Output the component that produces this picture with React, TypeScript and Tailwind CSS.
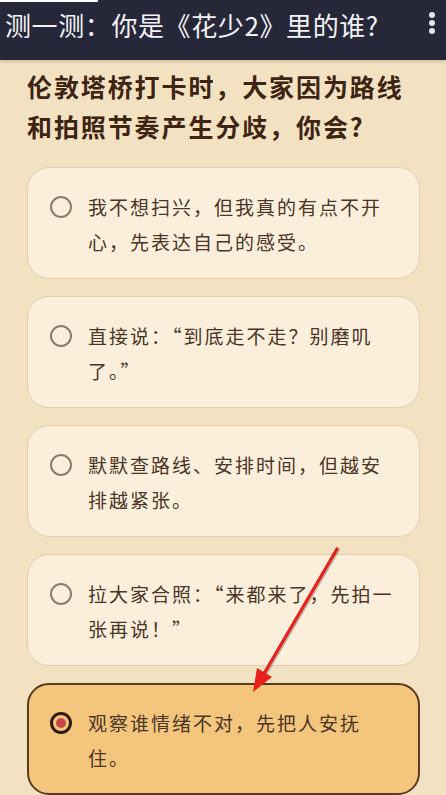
import React from "react";

const options: { lines: string[]; selected?: boolean }[] = [
  { lines: ["我不想扫兴，但我真的有点不开", "心，先表达自己的感受。"] },
  { lines: ["直接说：“到底走不走？别磨叽", "了。”"] },
  { lines: ["默默查路线、安排时间，但越安", "排越紧张。"] },
  { lines: ["拉大家合照：“来都来了，先拍一", "张再说！”"] },
  { lines: ["观察谁情绪不对，先把人安抚", "住。"], selected: true },
];

const font = { fontFamily: '"Noto Sans CJK SC", "Noto Sans", sans-serif' };

function Radio({ selected }: { selected?: boolean }) {
  if (selected) {
    return (
      <div className="flex h-[22px] w-[22px] shrink-0 items-center justify-center rounded-full border-[3px] border-[#2e1c12]">
        <div className="h-[10px] w-[10px] rounded-full bg-[#c7474c]" />
      </div>
    );
  }
  return <div className="h-[22px] w-[22px] shrink-0 rounded-full border-[2.5px] border-[#8b7c71]" />;
}

export default function App() {
  return (
    <div className="relative min-h-[795px] w-[446px] overflow-hidden bg-[#f3e2c2]" style={font}>
      <div className="absolute left-0 top-0 h-[2px] w-[98px] bg-white" />
      <header className="flex h-[60px] w-[446px] items-start bg-[#262739] pt-[10px] shadow-[0_2px_3px_rgba(0,0,0,0.15)]">
        <div className="w-[400px] shrink-0 pl-[5px] text-[26px] leading-[30px] font-normal tracking-[0.6px] text-[#f3f3f5] whitespace-nowrap">
          测一测：你是《花少2》里的谁?
        </div>
        <div className="ml-[28px] mt-[2px] flex w-[8px] shrink-0 flex-col items-center gap-[2px]">
          <div className="h-[6px] w-[6px] rounded-full bg-[#e4e4ea]" />
          <div className="h-[6px] w-[6px] rounded-full bg-[#e4e4ea]" />
          <div className="h-[6px] w-[6px] rounded-full bg-[#e4e4ea]" />
        </div>
      </header>

      <div className="px-[27px] pt-[6px]">
        <h2 className="text-[25px] leading-[40px] font-bold tracking-[1.9px] text-[#3e2413] whitespace-nowrap">
          伦敦塔桥打卡时，大家因为路线
          <br />
          和拍照节奏产生分歧，你会?
        </h2>

        <div className="mt-[21px] flex w-[393px] flex-col gap-[17px]">
          {options.map((o, i) => (
            <div
              key={i}
              className={
                o.selected
                  ? "flex h-[112px] items-start gap-[16px] rounded-[22px] border-2 border-[#5a3a20] bg-[#f4c57c] pl-[21px] pt-[20px]"
                  : "flex h-[112px] items-start gap-[16px] rounded-[22px] border border-[#e2cdac] bg-[#fbefdc] pl-[22px] pt-[21px]"
              }
            >
              <div className="flex h-[35px] items-center">
                <Radio selected={o.selected} />
              </div>
              <p className="text-[19px] leading-[35px] tracking-[2px] text-[#4a3527] whitespace-nowrap">
                {o.lines[0]}
                <br />
                {o.lines[1]}
              </p>
            </div>
          ))}
        </div>
      </div>

      <svg className="pointer-events-none absolute left-0 top-0" width="446" height="795" viewBox="0 0 446 795">
        <g transform="translate(1,1)" opacity="0.25">
          <line x1="337" y1="549" x2="262" y2="677" stroke="#000" strokeWidth="3.5" strokeLinecap="round" />
        </g>
        <line x1="337" y1="549" x2="262" y2="677" stroke="#e8201c" strokeWidth="3.2" strokeLinecap="round" />
        <polygon points="253,692 257,668 272,677" fill="#e8201c" />
      </svg>
    </div>
  );
}
